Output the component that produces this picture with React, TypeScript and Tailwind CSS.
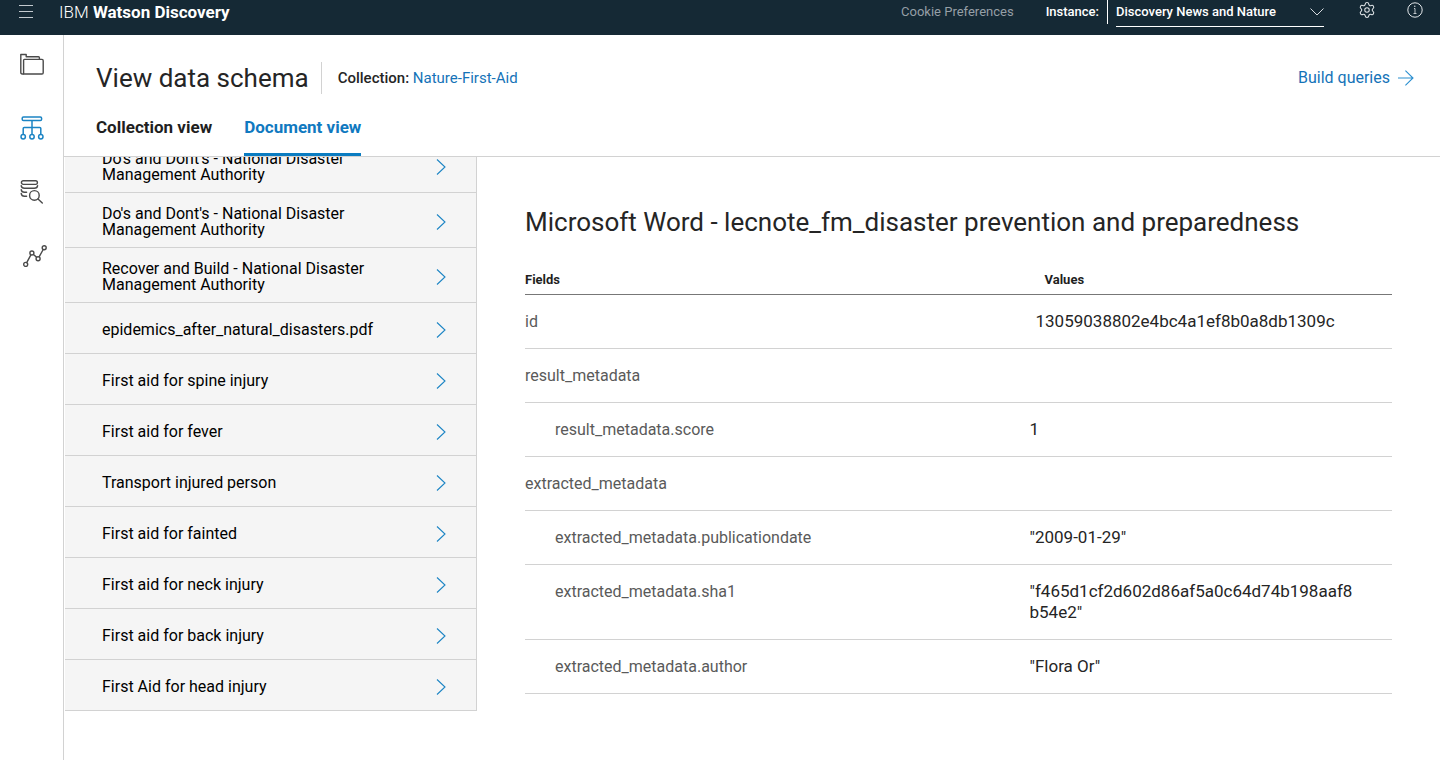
import React from "react";
import { Settings } from "lucide-react";

const documents = [
  "Do's and Dont's - National Disaster Management Authority",
  "Do's and Dont's - National Disaster Management Authority",
  "Recover and Build - National Disaster Management Authority",
  "epidemics_after_natural_disasters.pdf",
  "First aid for spine injury",
  "First aid for fever",
  "Transport injured person",
  "First aid for fainted",
  "First aid for neck injury",
  "First aid for back injury",
  "First Aid for head injury",
];

type Field = { name: string; value?: string; kind: "root" | "group" | "child" };

const fields: Field[] = [
  { name: "id", value: "13059038802e4bc4a1ef8b0a8db1309c", kind: "root" },
  { name: "result_metadata", kind: "group" },
  { name: "result_metadata.score", value: "1", kind: "child" },
  { name: "extracted_metadata", kind: "group" },
  { name: "extracted_metadata.publicationdate", value: '"2009-01-29"', kind: "child" },
  { name: "extracted_metadata.sha1", value: '"f465d1cf2d602d86af5a0c64d74b198aaf8b54e2"', kind: "child" },
  { name: "extracted_metadata.author", value: '"Flora Or"', kind: "child" },
];

function MenuIcon() {
  return (
    <svg width="14" height="14" viewBox="0 0 14 14" fill="none" stroke="#c3cacf" aria-hidden="true">
      <path d="M0 .5h14M0 6.5h14M0 12.5h14" />
    </svg>
  );
}

function ChevronDown() {
  return (
    <svg width="14" height="8" viewBox="0 0 14 8" fill="none" stroke="#d5dade" aria-hidden="true">
      <path d="M.5 .5 7 7 13.5 .5" />
    </svg>
  );
}

function InfoIcon() {
  return (
    <svg width="16" height="16" viewBox="0 0 16 16" fill="none" stroke="#e3e7ea" aria-hidden="true">
      <circle cx="8" cy="8" r="7.2" />
      <path d="M8 6.5v5M7 6.5h1M6.5 11.5h3" strokeWidth=".8" />
      <circle cx="7.8" cy="4.3" r=".7" fill="#e3e7ea" stroke="none" />
    </svg>
  );
}

function FoldersIcon() {
  return (
    <svg width="24" height="22" viewBox="0 0 24 22" fill="none" stroke="#4a4a4a" strokeWidth="1.4" strokeLinejoin="round" aria-hidden="true">
      <path d="M4 21H2.2Q.8 21 .8 19.5V1.5H6.2V3.7H18.5Q19.4 3.7 19.4 4.7V6.3" />
      <path d="M4.4 6.4H22Q23.2 6.4 23.2 7.7V19.7Q23.2 21 22 21H4.2Q3.6 21 3.6 20.2V7.2Q3.6 6.4 4.4 6.4Z" />
    </svg>
  );
}

function SchemaIcon() {
  return (
    <svg width="24" height="24" viewBox="0 0 24 24" fill="none" stroke="#1b84c4" strokeWidth="1.5" aria-hidden="true">
      <rect x="2.2" y="1" width="19.4" height="3.6" rx="1.3" />
      <path d="M12 4.6V18.6M3.2 18.6V12.4Q3.2 11.4 4.2 11.4H19.8Q20.8 11.4 20.8 12.4V18.6" />
      <circle cx="3.2" cy="20.8" r="2.2" />
      <circle cx="12" cy="20.8" r="2.2" />
      <circle cx="20.8" cy="20.8" r="2.2" />
    </svg>
  );
}

function DataSearchIcon() {
  return (
    <svg width="24" height="24" viewBox="0 0 24 24" fill="none" stroke="#4a4a4a" strokeWidth="1.4" strokeLinecap="round" aria-hidden="true">
      <rect x="1.4" y=".8" width="16" height="3.6" rx="1.8" />
      <path d="M1.2 5.6Q1.5 8.3 4.5 8.3H14.3Q17.3 8.3 17.6 5.6" />
      <path d="M1.2 9.6Q1.6 12.2 4.4 12.2H6.6M1.2 13.4Q1.6 16.3 4.4 16.3H6.6" />
      <circle cx="14.4" cy="15.4" r="4.8" />
      <path d="M18 19 22.3 23" />
    </svg>
  );
}

function TrendIcon() {
  return (
    <svg width="24" height="22" viewBox="0 0 24 22" fill="none" stroke="#4a4a4a" strokeWidth="1.4" aria-hidden="true">
      <circle cx="2.7" cy="19.4" r="2" />
      <circle cx="8.9" cy="8" r="2" />
      <circle cx="15.1" cy="13.7" r="2" />
      <circle cx="21.2" cy="2.7" r="2" />
      <path d="M3.7 17.6 7.9 9.8M10.4 9.4 13.6 12.3M16.1 11.9 20.2 4.5" />
    </svg>
  );
}

function ArrowRight() {
  return (
    <svg width="16" height="16" viewBox="0 0 16 16" fill="none" stroke="#2a8fd0" strokeWidth="1.1" aria-hidden="true">
      <path d="M0 8H15M7.4 .6 15 8 7.4 15.4" />
    </svg>
  );
}

function ChevronRight() {
  return (
    <svg width="10" height="16" viewBox="0 0 10 16" fill="none" stroke="#1b84c4" strokeWidth="1.1" className="shrink-0" aria-hidden="true">
      <path d="M1 .5 9 8 1 15.5" />
    </svg>
  );
}

function TopBar() {
  return (
    <header className="flex h-[35px] shrink-0 items-start bg-[#152935] text-white">
      <button type="button" aria-label="Menu" className="ml-[19px] flex h-6 items-center">
        <MenuIcon />
      </button>
      <div className="ml-[26px] text-[17px] leading-6">
        <span className="font-light">IBM</span> <span className="font-bold">Watson Discovery</span>
      </div>
      <div className="ml-auto flex items-start text-[13px] leading-6">
        <a href="#cookies" className="text-[#959fa6]">Cookie Preferences</a>
        <label htmlFor="instance" className="ml-8 border-r border-white pr-2 font-medium">Instance:</label>
        <div className="relative ml-2 w-52 border-b border-white pb-[2px]">
          <select id="instance" className="block h-6 w-full appearance-none bg-transparent pr-6 font-medium outline-none">
            <option>Discovery News and Nature</option>
          </select>
          <span className="pointer-events-none absolute right-0 top-2">
            <ChevronDown />
          </span>
        </div>
        <button type="button" aria-label="Settings" className="ml-[34px] flex h-5 items-center">
          <Settings size={18} strokeWidth={1.4} color="#dfe3e6" />
        </button>
        <button type="button" aria-label="Information" className="ml-[31px] mr-[17px] flex h-5 items-center">
          <InfoIcon />
        </button>
      </div>
    </header>
  );
}

function SideNav() {
  return (
    <nav aria-label="Main" className="flex w-16 shrink-0 flex-col items-center gap-10 border-r border-[#d2d2d2] pt-[17px]">
      <a href="#collections" aria-label="Collections" className="flex h-6 items-center"><FoldersIcon /></a>
      <a href="#schema" aria-label="Data schema" className="flex h-6 items-center"><SchemaIcon /></a>
      <a href="#queries" aria-label="Queries" className="flex h-6 items-center"><DataSearchIcon /></a>
      <a href="#performance" aria-label="Performance" className="ml-[6px] flex h-6 items-center"><TrendIcon /></a>
    </nav>
  );
}

function PageHeader() {
  return (
    <div className="flex shrink-0 flex-col border-b border-[#d2d2d2] pl-8 pr-[26px] pt-[27px]">
      <div className="flex h-8 items-center">
        <h1 className="border-r border-[#d2d2d2] pr-3 text-[26px] leading-8 text-[#252525]">View data schema</h1>
        <p className="pl-4 text-[15px] text-[#252525]">
          <span className="font-medium">Collection:</span>{" "}
          <a href="#collection" className="text-[#1573b8]">Nature-First-Aid</a>
        </p>
        <a href="#build" className="ml-auto flex items-center gap-2 text-base text-[#1573b8]">
          Build queries
          <ArrowRight />
        </a>
      </div>
      <div role="tablist" className="flex gap-8 pt-[21px] text-[17px] font-bold leading-6">
        <button type="button" role="tab" aria-selected="false" className="border-b-[3px] border-transparent pb-[14px] text-[#1f1f1f]">
          Collection view
        </button>
        <button type="button" role="tab" aria-selected="true" className="border-b-[3px] border-[#0a7cc1] pb-[14px] text-[#1079c0]">
          Document view
        </button>
      </div>
    </div>
  );
}

function DocumentList() {
  return (
    <div className="ml-px w-[412px] shrink-0 overflow-hidden">
      <ul className="-mt-[19px] border-r border-[#d2d2d2] bg-[#f5f5f5]">
        {documents.map((title, i) => (
          <li key={i} className="border-b border-[#d2d2d2]">
            <button
              type="button"
              className="flex min-h-[50px] w-full items-center justify-between pb-[9px] pl-[37px] pr-[30px] pt-[13px] text-left text-base leading-4 text-black"
            >
              <span className="w-[290px]">{title}</span>
              <ChevronRight />
            </button>
          </li>
        ))}
      </ul>
    </div>
  );
}

const nameIndent = { root: "", group: "", child: "pl-[30px]" };
const valueIndent = { root: "pl-[77px]", group: "", child: "pl-[71px]" };

function DocumentDetail() {
  return (
    <section className="min-w-0 flex-1 pl-12 pr-12 pt-[47px]">
      <h2 className="text-[26px] leading-9 text-[#252525]">
        Microsoft Word - lecnote_fm_disaster prevention and preparedness
      </h2>
      <table className="mt-6 w-full table-fixed border-collapse text-left">
        <thead>
          <tr className="border-b border-[#777] text-[13px] leading-4 text-[#1f1f1f]">
            <th scope="col" className="w-1/2 pb-[6px] pt-2 font-bold">Fields</th>
            <th scope="col" className="w-1/2 pb-[6px] pl-[86px] pt-2 font-bold">Values</th>
          </tr>
        </thead>
        <tbody>
          {fields.map((f) => (
            <tr key={f.name} className="border-b border-[#d2d2d2] align-top leading-[21px]">
              <td className={`py-4 text-base leading-[21px] text-[#5a5a5a] ${nameIndent[f.kind]}`}>{f.name}</td>
              <td className={`break-all py-4 pr-9 text-[17px] leading-[21px] text-[#252525] ${valueIndent[f.kind]}`}>{f.value}</td>
            </tr>
          ))}
        </tbody>
      </table>
    </section>
  );
}

export default function App() {
  return (
    <div className="flex min-h-screen flex-col bg-white font-[Roboto,'Liberation_Sans',sans-serif]">
      <TopBar />
      <div className="flex flex-1">
        <SideNav />
        <main className="flex min-w-0 flex-1 flex-col">
          <PageHeader />
          <div className="flex flex-1 items-start">
            <DocumentList />
            <DocumentDetail />
          </div>
        </main>
      </div>
    </div>
  );
}
